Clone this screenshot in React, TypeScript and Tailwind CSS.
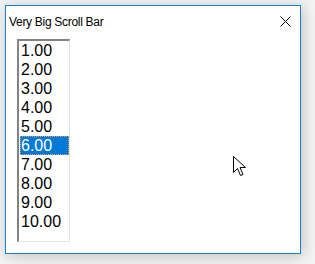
import React from "react";

export default function App() {
  const items = ["1.00", "2.00", "3.00", "4.00", "5.00", "6.00", "7.00", "8.00", "9.00", "10.00"];
  return (
    <div className="w-[315px] h-[264px] bg-[#f4f4f4] relative overflow-hidden">
      <div className="absolute left-[5px] top-[5px] w-[296px] h-[249px] border border-[#1a80d6] bg-white shadow-[2px_2px_14px_rgba(0,0,0,0.22)] flex flex-col">
        <div className="h-[30px] flex items-center justify-between pl-[3px] pr-[9px]" style={{ fontFamily: '"Liberation Sans", Arial, sans-serif' }}>
          <span className="text-[12px] tracking-[-0.3px] text-black leading-none mt-[1px]">Very Big Scroll Bar</span>
          <svg width="11" height="11" viewBox="0 0 11 11" className="mt-[1px]">
            <path d="M0.5 0.5 L10.5 10.5 M10.5 0.5 L0.5 10.5" stroke="#000" strokeWidth="1" />
          </svg>
        </div>
        <div className="flex-1 pl-[11px] pt-[3px]">
          <div className="w-[53px] h-[203px] border-t-2 border-l-2 border-t-[#838383] border-l-[#838383] border-r border-b border-r-[#e3e3e3] border-b-[#e3e3e3] bg-white pl-[1px]" style={{ fontFamily: '"Liberation Sans", Arial, sans-serif' }}>
            {items.map((t) => (
              <div
                key={t}
                className={
                  t === "6.00"
                    ? "h-[19px] leading-[19px] text-[16px] bg-[#0078d7] text-white pl-[1px] outline outline-1 outline-dotted outline-[#d9a060] -outline-offset-1"
                    : "h-[19px] leading-[19px] text-[16px] text-black pl-[1px]"
                }
              >
                {t}
              </div>
            ))}
          </div>
        </div>
      </div>
      <svg className="absolute left-[233px] top-[156px]" width="14" height="22" viewBox="0 0 14 22">
        <path d="M0.5 0.5 L0.5 16.5 L4.5 12.5 L7.5 19.5 L10 18.5 L7 11.5 L12.5 11.5 Z" fill="#fff" stroke="#000" strokeWidth="1" strokeLinejoin="miter" />
      </svg>
    </div>
  );
}
